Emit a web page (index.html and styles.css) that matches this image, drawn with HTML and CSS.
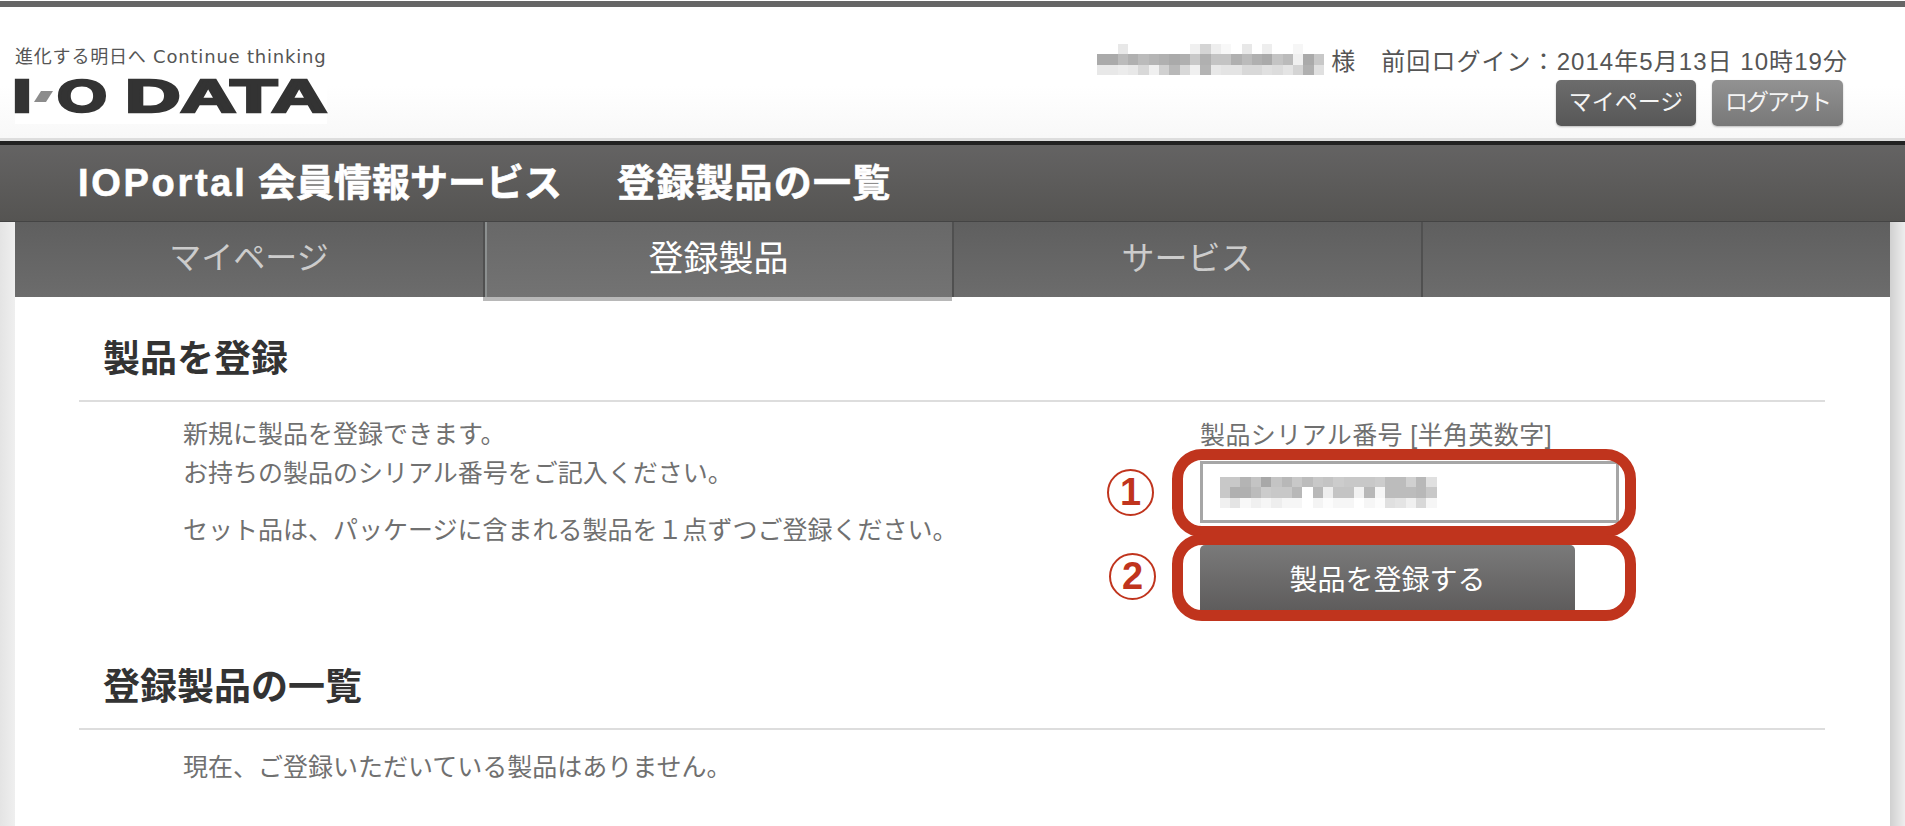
FILE: index.html
```html
<!DOCTYPE html>
<html lang="ja">
<head>
    <title>IOPortal 会員情報サービス</title>
    <meta charset="utf-8">
    <link rel="stylesheet" href="styles.css">
</head>
<body>
<div class="topline"></div>
<header class="header">
    <div class="logo">
        <div class="tagline">進化する明日へ Continue thinking</div>
        <svg class="logo-mark" width="312" height="36" viewBox="0 0 312 36">
            <text x="-3" y="35" textLength="20" lengthAdjust="spacingAndGlyphs">I</text>
            <polygon points="19,25 26,14 38,14 31,25" fill="#8c8c8c"></polygon>
            <text x="42" y="35" textLength="50" lengthAdjust="spacingAndGlyphs">O</text>
            <text x="110" y="35" textLength="202" lengthAdjust="spacingAndGlyphs">DATA</text>
        </svg>
    </div>
    <div class="user">
        <div class="user-line">
            <svg class="mosaic" width="229" height="31" viewBox="0 0 22 3" shape-rendering="crispEdges">
                <rect x="2" y="0" width="1" height="1" fill="#e8e8e8"></rect>
                <rect x="9" y="0" width="1" height="1" fill="#f0f0f0"></rect>
                <rect x="10" y="0" width="1" height="1" fill="#d4d4d4"></rect>
                <rect x="11" y="0" width="1" height="1" fill="#eeeeee"></rect>
                <rect x="12" y="0" width="1" height="1" fill="#f8f8f8"></rect>
                <rect x="14" y="0" width="1" height="1" fill="#e8e8e8"></rect>
                <rect x="16" y="0" width="1" height="1" fill="#eeeeee"></rect>
                <rect x="19" y="0" width="1" height="1" fill="#f6f6f6"></rect>
                <rect x="0" y="1" width="1" height="1" fill="#aaaaaa"></rect>
                <rect x="1" y="1" width="1" height="1" fill="#aaaaaa"></rect>
                <rect x="2" y="1" width="1" height="1" fill="#bbbbbb"></rect>
                <rect x="3" y="1" width="1" height="1" fill="#b0b0b0"></rect>
                <rect x="4" y="1" width="1" height="1" fill="#bbbbbb"></rect>
                <rect x="5" y="1" width="1" height="1" fill="#b5b5b5"></rect>
                <rect x="6" y="1" width="1" height="1" fill="#b0b0b0"></rect>
                <rect x="7" y="1" width="1" height="1" fill="#aaaaaa"></rect>
                <rect x="8" y="1" width="1" height="1" fill="#b0b0b0"></rect>
                <rect x="9" y="1" width="1" height="1" fill="#c8c8c8"></rect>
                <rect x="10" y="1" width="1" height="1" fill="#b0b0b0"></rect>
                <rect x="11" y="1" width="1" height="1" fill="#c4c4c4"></rect>
                <rect x="12" y="1" width="1" height="1" fill="#c4c4c4"></rect>
                <rect x="13" y="1" width="1" height="1" fill="#b0b0b0"></rect>
                <rect x="14" y="1" width="1" height="1" fill="#bbbbbb"></rect>
                <rect x="15" y="1" width="1" height="1" fill="#b0b0b0"></rect>
                <rect x="16" y="1" width="1" height="1" fill="#aaaaaa"></rect>
                <rect x="17" y="1" width="1" height="1" fill="#c4c4c4"></rect>
                <rect x="18" y="1" width="1" height="1" fill="#bbbbbb"></rect>
                <rect x="19" y="1" width="1" height="1" fill="#f0f0f0"></rect>
                <rect x="20" y="1" width="1" height="1" fill="#aaaaaa"></rect>
                <rect x="21" y="1" width="1" height="1" fill="#c8c8c8"></rect>
                <rect x="0" y="2" width="1" height="1" fill="#e8e8e8"></rect>
                <rect x="1" y="2" width="1" height="1" fill="#e8e8e8"></rect>
                <rect x="2" y="2" width="1" height="1" fill="#ececec"></rect>
                <rect x="3" y="2" width="1" height="1" fill="#e8e8e8"></rect>
                <rect x="4" y="2" width="1" height="1" fill="#d8d8d8"></rect>
                <rect x="5" y="2" width="1" height="1" fill="#f0f0f0"></rect>
                <rect x="6" y="2" width="1" height="1" fill="#d0d0d0"></rect>
                <rect x="7" y="2" width="1" height="1" fill="#b8b8b8"></rect>
                <rect x="8" y="2" width="1" height="1" fill="#d8d8d8"></rect>
                <rect x="9" y="2" width="1" height="1" fill="#f0f0f0"></rect>
                <rect x="10" y="2" width="1" height="1" fill="#b4b4b4"></rect>
                <rect x="11" y="2" width="1" height="1" fill="#e8e8e8"></rect>
                <rect x="12" y="2" width="1" height="1" fill="#e4e4e4"></rect>
                <rect x="13" y="2" width="1" height="1" fill="#e4e4e4"></rect>
                <rect x="14" y="2" width="1" height="1" fill="#d8d8d8"></rect>
                <rect x="15" y="2" width="1" height="1" fill="#d8d8d8"></rect>
                <rect x="16" y="2" width="1" height="1" fill="#e0e0e0"></rect>
                <rect x="17" y="2" width="1" height="1" fill="#dcdcdc"></rect>
                <rect x="18" y="2" width="1" height="1" fill="#e4e4e4"></rect>
                <rect x="19" y="2" width="1" height="1" fill="#d4d4d4"></rect>
                <rect x="20" y="2" width="1" height="1" fill="#b0b0b0"></rect>
                <rect x="21" y="2" width="1" height="1" fill="#e0e0e0"></rect>
            </svg>
            <span class="user-name">様</span>
            <span class="last-login">前回ログイン：2014年5月13日 10時19分</span>
        </div>
        <div class="user-buttons">
            <a class="small-btn">マイページ</a>
            <a class="small-btn logout">ログアウト</a>
        </div>
    </div>
</header>
<div class="titlebar">
    <h1><span class="brand">IOPortal</span> 会員情報サービス<span class="page-name">登録製品の一覧</span></h1>
</div>
<div class="main">
    <nav class="tabs">
        <a class="tab first">マイページ</a>
        <a class="tab active">登録製品</a>
        <a class="tab">サービス</a>
        <a class="tab"></a>
    </nav>
    <div class="panel">
        <h2>製品を登録</h2>
        <div class="register">
            <div class="register-text">
                <p>新規に製品を登録できます。<br>お持ちの製品のシリアル番号をご記入ください。</p>
                <p>セット品は、パッケージに含まれる製品を１点ずつご登録ください。</p>
            </div>
            <div class="register-form">
                <div class="serial-label">製品シリアル番号 [半角英数字]</div>
                <div class="field">
                    <div class="serial-input">
                        <svg class="mosaic" width="218" height="31" viewBox="0 0 21 3" shape-rendering="crispEdges">
                            <rect x="0" y="0" width="1" height="1" fill="#c8c8c8"></rect>
                            <rect x="1" y="0" width="1" height="1" fill="#c8c8c8"></rect>
                            <rect x="2" y="0" width="1" height="1" fill="#b4b4b4"></rect>
                            <rect x="3" y="0" width="1" height="1" fill="#c4c4c4"></rect>
                            <rect x="4" y="0" width="1" height="1" fill="#a8a8a8"></rect>
                            <rect x="5" y="0" width="1" height="1" fill="#c4c4c4"></rect>
                            <rect x="6" y="0" width="1" height="1" fill="#b8b8b8"></rect>
                            <rect x="7" y="0" width="1" height="1" fill="#c8c8c8"></rect>
                            <rect x="8" y="0" width="1" height="1" fill="#bcbcbc"></rect>
                            <rect x="9" y="0" width="1" height="1" fill="#c8c8c8"></rect>
                            <rect x="10" y="0" width="1" height="1" fill="#c4c4c4"></rect>
                            <rect x="11" y="0" width="1" height="1" fill="#cccccc"></rect>
                            <rect x="12" y="0" width="1" height="1" fill="#c8c8c8"></rect>
                            <rect x="13" y="0" width="1" height="1" fill="#c8c8c8"></rect>
                            <rect x="14" y="0" width="1" height="1" fill="#c8c8c8"></rect>
                            <rect x="15" y="0" width="1" height="1" fill="#cccccc"></rect>
                            <rect x="16" y="0" width="1" height="1" fill="#bcbcbc"></rect>
                            <rect x="17" y="0" width="1" height="1" fill="#bcbcbc"></rect>
                            <rect x="18" y="0" width="1" height="1" fill="#d0d0d0"></rect>
                            <rect x="19" y="0" width="1" height="1" fill="#b8b8b8"></rect>
                            <rect x="20" y="0" width="1" height="1" fill="#e0e0e0"></rect>
                            <rect x="0" y="1" width="1" height="1" fill="#c8c8c8"></rect>
                            <rect x="1" y="1" width="1" height="1" fill="#b0b0b0"></rect>
                            <rect x="2" y="1" width="1" height="1" fill="#b0b0b0"></rect>
                            <rect x="3" y="1" width="1" height="1" fill="#bcbcbc"></rect>
                            <rect x="4" y="1" width="1" height="1" fill="#cccccc"></rect>
                            <rect x="5" y="1" width="1" height="1" fill="#c8c8c8"></rect>
                            <rect x="6" y="1" width="1" height="1" fill="#c8c8c8"></rect>
                            <rect x="7" y="1" width="1" height="1" fill="#b8b8b8"></rect>
                            <rect x="9" y="1" width="1" height="1" fill="#b8b8b8"></rect>
                            <rect x="10" y="1" width="1" height="1" fill="#eeeeee"></rect>
                            <rect x="11" y="1" width="1" height="1" fill="#c4c4c4"></rect>
                            <rect x="12" y="1" width="1" height="1" fill="#c4c4c4"></rect>
                            <rect x="13" y="1" width="1" height="1" fill="#f2f2f2"></rect>
                            <rect x="14" y="1" width="1" height="1" fill="#b8b8b8"></rect>
                            <rect x="15" y="1" width="1" height="1" fill="#f6f6f6"></rect>
                            <rect x="16" y="1" width="1" height="1" fill="#bcbcbc"></rect>
                            <rect x="17" y="1" width="1" height="1" fill="#bcbcbc"></rect>
                            <rect x="18" y="1" width="1" height="1" fill="#bcbcbc"></rect>
                            <rect x="19" y="1" width="1" height="1" fill="#b8b8b8"></rect>
                            <rect x="20" y="1" width="1" height="1" fill="#c8c8c8"></rect>
                            <rect x="0" y="2" width="1" height="1" fill="#f0f0f0"></rect>
                            <rect x="1" y="2" width="1" height="1" fill="#e4e4e4"></rect>
                            <rect x="2" y="2" width="1" height="1" fill="#f8f8f8"></rect>
                            <rect x="3" y="2" width="1" height="1" fill="#f0f0f0"></rect>
                            <rect x="4" y="2" width="1" height="1" fill="#f6f6f6"></rect>
                            <rect x="5" y="2" width="1" height="1" fill="#eeeeee"></rect>
                            <rect x="6" y="2" width="1" height="1" fill="#f6f6f6"></rect>
                            <rect x="7" y="2" width="1" height="1" fill="#f6f6f6"></rect>
                            <rect x="9" y="2" width="1" height="1" fill="#f4f4f4"></rect>
                            <rect x="10" y="2" width="1" height="1" fill="#fcfcfc"></rect>
                            <rect x="11" y="2" width="1" height="1" fill="#f6f6f6"></rect>
                            <rect x="12" y="2" width="1" height="1" fill="#f6f6f6"></rect>
                            <rect x="14" y="2" width="1" height="1" fill="#f6f6f6"></rect>
                            <rect x="15" y="2" width="1" height="1" fill="#fcfcfc"></rect>
                            <rect x="16" y="2" width="1" height="1" fill="#e0e0e0"></rect>
                            <rect x="17" y="2" width="1" height="1" fill="#e4e4e4"></rect>
                            <rect x="18" y="2" width="1" height="1" fill="#f0f0f0"></rect>
                            <rect x="19" y="2" width="1" height="1" fill="#d8d8d8"></rect>
                            <rect x="20" y="2" width="1" height="1" fill="#f6f6f6"></rect>
                        </svg>
                    </div>
                    <span class="num">1</span>
                    <span class="ring"></span>
                </div>
                <div class="field field-btn">
                    <button type="button" class="register-btn">製品を登録する</button>
                    <span class="num">2</span>
                    <span class="ring"></span>
                </div>
            </div>
        </div>
        <h2 class="list-title">登録製品の一覧</h2>
        <p class="empty">現在、ご登録いただいている製品はありません。</p>
    </div>
</div>
</body>
</html>
```

FILE: styles.css
```css
* {
    box-sizing: border-box;
}

html, body {
    height: 826px;
    overflow: hidden;
}

body {
    margin: 0;
    background: linear-gradient(to right, #e4e4e4, #efefef 15px, #d0d0d0 1890px, #eeeeee);
    color: #707070;
    font-family: "Liberation Sans", "Noto Sans CJK JP", sans-serif;
}

.topline {
    height: 7px;
    background: #666;
    border-top: 1px solid #fff;
}

.header {
    display: flex;
    justify-content: space-between;
    height: 134px;
    padding: 0 57px 0 15px;
    background: linear-gradient(#fff 60%, #f8f8f8);
    border-bottom: 3px solid #ddd;
}

.logo {
    width: 312px;
    height: 77px;
    margin-top: 40px;
    background: #fff;
}

.tagline {
    height: 30px;
    color: #555;
    font-family: "DejaVu Sans", "Noto Sans CJK JP", sans-serif;
    font-size: 18px;
    letter-spacing: 0.8px;
    line-height: 20px;
    white-space: nowrap;
}

.logo-mark {
    display: block;
    overflow: visible;
}

.logo-mark text {
    fill: #333;
    stroke: #333;
    stroke-width: 2.5px;
    font-family: "Liberation Sans", sans-serif;
    font-size: 46px;
    font-weight: bold;
}

.user {
    display: flex;
    flex-direction: column;
    align-items: flex-end;
    padding-top: 32px;
}

.user-line {
    display: flex;
    align-items: center;
    height: 41px;
    color: #555;
    font-size: 24px;
    white-space: nowrap;
}

.mosaic {
    display: block;
}

.user-name {
    margin-left: 6px;
}

.last-login {
    margin-left: 26px;
    letter-spacing: 1.05px;
}

.user-buttons {
    display: flex;
    gap: 16px;
    margin: 0 5px 0 0;
}

.small-btn {
    width: 140px;
    height: 46px;
    border-radius: 5px;
    background: linear-gradient(#6c6c6c, #575757);
    box-shadow: 0 1px 2px #bbb;
    color: #f4f4f4;
    font-size: 23px;
    line-height: 44px;
    text-align: center;
}

.small-btn.logout {
    width: 131px;
    background: linear-gradient(#929292, #787878);
    letter-spacing: -2px;
}

.titlebar {
    height: 81px;
    padding-left: 78px;
    background: linear-gradient(#646363, #555452);
    border-top: 4px solid #222;
    border-bottom: 1px solid #444;
}

.titlebar h1 {
    margin: 0;
    color: #fff;
    font-size: 38px;
    font-weight: bold;
    line-height: 76px;
    white-space: nowrap;
    -webkit-text-stroke: 0.6px #fff;
}

.brand {
    letter-spacing: 2.7px;
}

.page-name {
    margin-left: 55px;
    letter-spacing: 1.2px;
}

.main {
    margin: 0 15px;
}

.tabs {
    display: flex;
    height: 75px;
}

.tab {
    width: 469px;
    border-left: 2px solid #505050;
    background: linear-gradient(#5f5f5f, #6c6c6c);
    color: #ccc;
    font-size: 33px;
    line-height: 73px;
    text-align: center;
}

.tab.first {
    width: 468px;
    border-left: none;
    font-size: 32px;
}

.tab:last-child {
    flex: 1;
}

.tab.active {
    background: linear-gradient(#686868, #737373);
    box-shadow: 0 4px 0 #b8b8b8, inset 2px 0 0 #8c9090;
    color: #fff;
    font-size: 35px;
    position: relative;
}

.panel {
    height: 529px;
    padding: 0 65px 0 64px;
    background: #fff;
}

.panel h2 {
    margin: 0;
    padding: 38px 0 15px 24px;
    border-bottom: 2px solid #ddd;
    color: #333;
    font-size: 37px;
    font-weight: bold;
    line-height: 50px;
}

.panel h2.list-title {
    padding: 52px 0 15px 24px;
}

.register {
    display: grid;
    grid-template-columns: 1121px 1fr;
}

.register-text {
    padding: 13px 0 0 104px;
    font-size: 25px;
    line-height: 39px;
}

.register-text p {
    margin: 0 0 18px;
}

.register-form {
    padding-top: 13px;
}

.serial-label {
    height: 46px;
    font-size: 25px;
    letter-spacing: 0.4px;
    line-height: 40px;
    white-space: nowrap;
}

.field {
    position: relative;
    width: 419px;
    height: 62px;
}

.field-btn {
    height: 66px;
    margin-top: 22px;
}

.serial-input {
    display: flex;
    align-items: center;
    height: 100%;
    padding-left: 16px;
    border: 3px solid #a6a6a6;
    background: #fff;
}

.register-btn {
    display: block;
    width: 375px;
    height: 100%;
    padding: 0;
    border: none;
    border-radius: 5px 5px 0 0;
    background: linear-gradient(#7a7a7a, #5e5c5c);
    color: #fff;
    font-family: inherit;
    font-size: 28px;
}

.ring {
    position: absolute;
    left: -28px;
    top: -12px;
    width: 464px;
    height: 88px;
    border: 11px solid #c0341d;
    border-radius: 30px;
}

.field-btn .ring {
    top: -11px;
    height: 87px;
}

.num {
    position: absolute;
    left: -93px;
    top: 8px;
    width: 47px;
    height: 47px;
    border: 2px solid #c0341d;
    border-radius: 50%;
    color: #c0341d;
    font-size: 38px;
    font-weight: bold;
    line-height: 43px;
    text-align: center;
}

.field-btn .num {
    left: -91px;
}

.panel p.empty {
    margin: 0;
    padding: 17px 0 0 104px;
    font-size: 25px;
    line-height: 40px;
}
```
